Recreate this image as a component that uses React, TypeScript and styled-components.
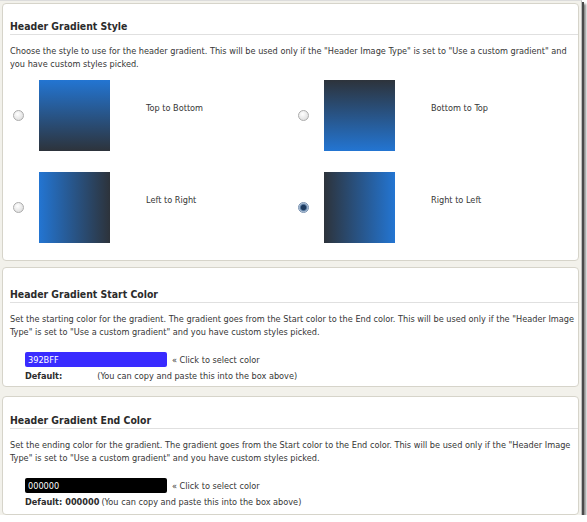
import styled, { createGlobalStyle } from 'styled-components';

const GlobalStyle = createGlobalStyle`
  html, body {
    margin: 0;
    padding: 0;
    background: #ffffff;
  }
  body {
    font-family: "DejaVu Sans Condensed", "DejaVu Sans", sans-serif;
    font-size: 9.1px;
    color: #363636;
  }
`;

type GradientOption = {
  label: string;
  dir: string;
  checked: boolean;
};

const options: GradientOption[] = [
  { label: 'Top to Bottom', dir: 'to bottom', checked: false },
  { label: 'Bottom to Top', dir: 'to top', checked: false },
  { label: 'Left to Right', dir: 'to right', checked: false },
  { label: 'Right to Left', dir: 'to left', checked: true },
];

const App = () => {
  return (
    <>
      <GlobalStyle />
      <Frame>
        <Panel $height={259} $top={0} $padTop={15}>
          <Heading>Header Gradient Style</Heading>
          <Description>
            Choose the style to use for the header gradient. This will be used only if the "Header Image Type" is set to
            "Use a custom gradient" and
            <br />
            you have custom styles picked.
          </Description>
          <OptionGrid>
            {options.map((opt) => (
              <Option key={opt.label}>
                <Radio name="gradient-style" defaultChecked={opt.checked} />
                <Swatch $dir={opt.dir} />
                <OptionLabel>{opt.label}</OptionLabel>
              </Option>
            ))}
          </OptionGrid>
        </Panel>

        <Panel $height={120} $top={6} $padTop={19}>
          <Heading>Header Gradient Start Color</Heading>
          <Description>
            Set the starting color for the gradient. The gradient goes from the Start color to the End color. This will be
            used only if the "Header Image
            <br />
            Type" is set to "Use a custom gradient" and you have custom styles picked.
          </Description>
          <ColorRow>
            <ColorField $bg="#392BFF" value="392BFF" readOnly />
            <Hint>« Click to select color</Hint>
          </ColorRow>
          <DefaultRow>
            <DefaultLabel>Default:</DefaultLabel>
            <DefaultValue />
            <Hint>(You can copy and paste this into the box above)</Hint>
          </DefaultRow>
        </Panel>

        <Panel $height={119} $top={9} $padTop={16}>
          <Heading>Header Gradient End Color</Heading>
          <Description>
            Set the ending color for the gradient. The gradient goes from the Start color to the End color. This will be
            used only if the "Header Image
            <br />
            Type" is set to "Use a custom gradient" and you have custom styles picked.
          </Description>
          <ColorRow>
            <ColorField $bg="#000000" value="000000" readOnly />
            <Hint>« Click to select color</Hint>
          </ColorRow>
          <DefaultRow>
            <DefaultLabel>Default:</DefaultLabel>
            <DefaultValue>000000</DefaultValue>
            <Hint>(You can copy and paste this into the box above)</Hint>
          </DefaultRow>
        </Panel>
      </Frame>
    </>
  );
};

export default App;

const Frame = styled.div`
  width: 582px;
  height: 515px;
  box-sizing: border-box;
  padding: 2px 2px 0 2px;
  display: flex;
  flex-direction: column;
  background: #f2f1eb;
  border-top: 1px solid #dcdcdc;
  border-right: 1px solid #bdbdbd;
  box-shadow: 2px 2px 0 #4a4a4a, 4px 4px 2px #8a8a8a;
`;

const Panel = styled.section<{ $height: number; $top: number; $padTop: number }>`
  height: ${(p) => p.$height}px;
  margin-top: ${(p) => p.$top}px;
  box-sizing: border-box;
  padding: ${(p) => p.$padTop}px 0 0 7px;
  background: #ffffff;
  border: 1px solid #d6d4ca;
  border-radius: 4px;
`;

const Heading = styled.h2`
  margin: 0;
  padding-bottom: 1px;
  font-family: "DejaVu Sans Condensed", "DejaVu Sans", sans-serif;
  font-size: 10.4px;
  font-weight: 700;
  line-height: 14px;
  color: #2b2b2b;
  border-bottom: 1px solid #e0e0e0;
`;

const Description = styled.p`
  margin: 10px 0 0;
  line-height: 12.5px;
  white-space: nowrap;
`;

const OptionGrid = styled.div`
  display: grid;
  grid-template-columns: 285px 285px;
  row-gap: 21px;
  margin-top: 10px;
`;

const Option = styled.div`
  display: flex;
  align-items: center;
`;

const Radio = styled.input.attrs({ type: 'radio' })`
  appearance: none;
  width: 11px;
  height: 11px;
  margin: 0 15px 0 3px;
  border-radius: 50%;
  border: 1px solid #acacac;
  background: radial-gradient(circle at 40% 35%, #ffffff, #d6d6d6);
  box-sizing: border-box;

  &:checked {
    border-color: #7690b0;
    background: radial-gradient(circle, #1d3a5e 0 2.2px, #4f729a 3px, #c4d3e4 4.5px);
  }
`;

const Swatch = styled.div<{ $dir: string }>`
  width: 71px;
  height: 71px;
  background: linear-gradient(${(p) => p.$dir}, #2375d2, #2d333b);
`;

const OptionLabel = styled.span`
  margin-left: 36px;
  padding-bottom: 16px;
`;

const ColorRow = styled.div`
  display: flex;
  align-items: center;
  gap: 5px;
  margin: 14px 0 0 15px;
`;

const ColorField = styled.input<{ $bg: string }>`
  width: 142px;
  height: 15px;
  box-sizing: border-box;
  margin: 0;
  padding: 0 3px;
  border: none;
  border-radius: 2px;
  background: ${(p) => p.$bg};
  color: #ffffff;
  font: inherit;
  outline: none;
`;

const Hint = styled.span`
  color: #363636;
`;

const DefaultRow = styled.div`
  display: flex;
  align-items: center;
  margin: 3px 0 0 15px;
  line-height: 13px;
`;

const DefaultLabel = styled.span`
  font-weight: 700;
  color: #2b2b2b;
`;

const DefaultValue = styled.span`
  min-width: 30px;
  margin: 0 2px 0 3px;
  font-weight: 700;
  color: #2b2b2b;
`;
